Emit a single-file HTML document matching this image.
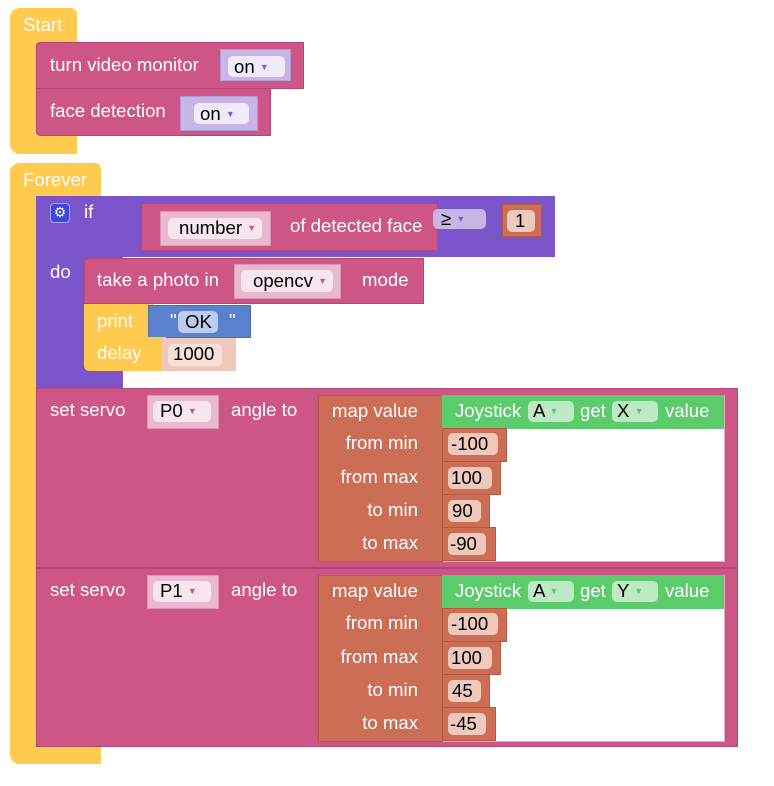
<!DOCTYPE html><html><head><meta charset="utf-8"><style>
body{margin:0;width:774px;height:786px;background:#fff;position:relative;overflow:hidden;font-family:"Liberation Sans",Arial,sans-serif;font-size:18.6px}
div{position:absolute;box-sizing:border-box}
.t{color:#fff;white-space:nowrap;line-height:20px}
.k{color:#000;white-space:nowrap;line-height:20px}
.y{background:#ffca4d}.p{background:#ce5686;border:1px solid #b54572}.u{background:#7d55cb}
.o{background:#cc6d55;border:1px solid #b35a43}.g{background:#5ccb6c}
.f{border-radius:5px}
.ar{font-size:9px;color:#8a5ad0;vertical-align:3px}
</style></head><body>
<!-- Start -->
<div class="y" style="left:10px;top:8px;width:67px;height:35px;border-radius:10px 6px 0 0"></div>
<div class="y" style="left:10px;top:8px;width:27px;height:146px;border-radius:10px 0 0 10px"></div>
<div class="y" style="left:10px;top:136px;width:67px;height:18px;border-radius:0 0 0 10px"></div>
<div class="t" style="left:23px;top:15px">Start</div>
<div class="p" style="left:36px;top:42px;width:268px;height:47px;border-radius:4px 0 0 0"></div>
<div class="t" style="left:50px;top:55px">turn video monitor</div>
<div style="left:220px;top:49px;width:71px;height:32px;background:#c8b5e5;border:1px solid #b09ad6"></div>
<div class="f" style="left:228px;top:56px;width:57px;height:21px;background:#f0ebfa"></div>
<div class="k" style="left:234px;top:57px">on <span class="ar">▼</span></div>
<div class="p" style="left:36px;top:88px;width:235px;height:48px;border-radius:0 0 0 4px"></div>
<div class="t" style="left:50px;top:101px">face detection</div>
<div style="left:180px;top:96px;width:78px;height:35px;background:#c8b5e5;border:1px solid #b09ad6"></div>
<div class="f" style="left:194px;top:103px;width:55px;height:21px;background:#f0ebfa"></div>
<div class="k" style="left:200px;top:104px">on <span class="ar">▼</span></div>
<!-- Forever -->
<div class="y" style="left:10px;top:163px;width:91px;height:35px;border-radius:10px 6px 0 0"></div>
<div class="y" style="left:10px;top:163px;width:27px;height:601px;border-radius:10px 0 0 10px"></div>
<div class="y" style="left:10px;top:745px;width:91px;height:19px;border-radius:0 0 0 10px"></div>
<div class="t" style="left:23px;top:170px">Forever</div>
<!-- if -->
<div class="u" style="left:36px;top:196px;width:519px;height:61px;border-radius:4px 0 0 0"></div>
<div class="u" style="left:36px;top:196px;width:87px;height:193px"></div>
<div style="left:50px;top:203px;width:20px;height:20px;background:#3c46e0;border:1px solid #a7a7ff;border-radius:4px;color:#fff;font-size:14px;line-height:17px;text-align:center">⚙</div>
<div class="t" style="left:84px;top:202px">if</div>
<div class="t" style="left:50px;top:262px">do</div>
<div class="p" style="left:141px;top:203px;width:297px;height:48px"></div>
<div style="left:160px;top:211px;width:111px;height:35px;background:#eab9cf;border:1px solid #d897b3"></div>
<div class="f" style="left:168px;top:218px;width:94px;height:21px;background:#f8e6ee"></div>
<div class="k" style="left:179px;top:218px">number <span class="ar" style="color:#ce5686">▼</span></div>
<div class="t" style="left:290px;top:216px">of detected face</div>
<div class="f" style="left:433px;top:209px;width:53px;height:20px;background:#c8b5e5"></div>
<div class="k" style="left:441px;top:209px">≥ <span class="ar">▼</span></div>
<div class="o" style="left:502px;top:204px;width:40px;height:33px"></div>
<div class="f" style="left:507px;top:210px;width:28px;height:22px;background:#f0c9bd"></div>
<div class="k" style="left:515px;top:211px">1</div>
<div class="p" style="left:84px;top:258px;width:340px;height:46px;border-radius:4px 0 0 0"></div>
<div class="t" style="left:97px;top:270px">take a photo in</div>
<div style="left:234px;top:264px;width:107px;height:35px;background:#eab9cf;border:1px solid #d897b3"></div>
<div class="f" style="left:241px;top:270px;width:92px;height:22px;background:#f8e6ee"></div>
<div class="k" style="left:253px;top:271px">opencv <span class="ar" style="color:#ce5686">▼</span></div>
<div class="t" style="left:362px;top:270px">mode</div>
<div class="y" style="left:84px;top:304px;width:70px;height:34px"></div>
<div class="t" style="left:97px;top:311px">print</div>
<div style="left:148px;top:305px;width:103px;height:33px;background:#5b80cc;border:1px solid #4a6db5"></div>
<div class="t" style="left:170px;top:311px">"</div>
<div class="f" style="left:178px;top:311px;width:40px;height:22px;background:#bcccee"></div>
<div class="k" style="left:185px;top:312px">OK</div>
<div class="t" style="left:229px;top:311px">"</div>
<div class="y" style="left:84px;top:337px;width:82px;height:34px;border-radius:0 0 0 5px"></div>
<div class="t" style="left:97px;top:343px">delay</div>
<div style="left:162px;top:338px;width:74px;height:33px;background:#f0c9bd"></div>
<div class="f" style="left:168px;top:344px;width:54px;height:22px;background:#f7e0d8"></div>
<div class="k" style="left:173px;top:344px">1000</div>
<!-- servo blocks -->
<div class="p" style="left:36px;top:388px;width:702px;height:180px"></div>
<div class="p" style="left:36px;top:568px;width:702px;height:179px"></div>
<div class="t" style="left:50px;top:400px">set servo</div>
<div class="t" style="left:50px;top:580px">set servo</div>
<div style="left:147px;top:395px;width:72px;height:34px;background:#eab9cf;border:1px solid #d897b3"></div>
<div class="f" style="left:153px;top:401px;width:58px;height:21px;background:#f8e6ee"></div>
<div class="k" style="left:160px;top:401px">P0 <span class="ar" style="color:#ce5686">▼</span></div>
<div style="left:147px;top:575px;width:72px;height:34px;background:#eab9cf;border:1px solid #d897b3"></div>
<div class="f" style="left:153px;top:581px;width:58px;height:21px;background:#f8e6ee"></div>
<div class="k" style="left:160px;top:581px">P1 <span class="ar" style="color:#ce5686">▼</span></div>
<div class="t" style="left:231px;top:400px">angle to</div>
<div class="t" style="left:231px;top:580px">angle to</div>

<div style="left:318px;top:395px;width:407px;height:167px;background:#fff;border:1px solid #e0a9bf"></div>
<div class="o" style="left:318px;top:395px;width:125px;height:167px"></div>
<div class="g" style="left:442px;top:395px;width:282px;height:34px"></div>
<div class="t" style="left:332px;top:401px">map value</div>
<div class="t" style="left:455px;top:401px">Joystick</div>
<div class="f" style="left:528px;top:401px;width:46px;height:21px;background:#bde9c4"></div>
<div class="k" style="left:533px;top:401px">A <span class="ar" style="color:#5ccb6c">▼</span></div>
<div class="t" style="left:580px;top:401px">get</div>
<div class="f" style="left:612px;top:401px;width:46px;height:21px;background:#bde9c4"></div>
<div class="k" style="left:617px;top:401px">X <span class="ar" style="color:#5ccb6c">▼</span></div>
<div class="t" style="left:665px;top:401px">value</div>
<div class="t" style="left:290px;top:433px;width:128px;text-align:right">from min</div>
<div class="t" style="left:290px;top:467px;width:128px;text-align:right">from max</div>
<div class="t" style="left:290px;top:500px;width:128px;text-align:right">to min</div>
<div class="t" style="left:290px;top:533px;width:128px;text-align:right">to max</div>
<div class="o" style="left:442px;top:428px;width:65px;height:34px"></div><div class="f" style="left:448px;top:433px;width:50px;height:22px;background:#f0c9bd"></div><div class="k" style="left:451px;top:434px">-100</div>
<div class="o" style="left:442px;top:461px;width:59px;height:34px"></div><div class="f" style="left:448px;top:467px;width:44px;height:22px;background:#f0c9bd"></div><div class="k" style="left:451px;top:468px">100</div>
<div class="o" style="left:442px;top:494px;width:48px;height:34px"></div><div class="f" style="left:448px;top:500px;width:33px;height:22px;background:#f0c9bd"></div><div class="k" style="left:452px;top:501px">90</div>
<div class="o" style="left:442px;top:527px;width:54px;height:34px"></div><div class="f" style="left:448px;top:533px;width:38px;height:22px;background:#f0c9bd"></div><div class="k" style="left:450px;top:534px">-90</div>

<div style="left:318px;top:575px;width:407px;height:167px;background:#fff;border:1px solid #e0a9bf"></div>
<div class="o" style="left:318px;top:575px;width:125px;height:167px"></div>
<div class="g" style="left:442px;top:575px;width:282px;height:34px"></div>
<div class="t" style="left:332px;top:581px">map value</div>
<div class="t" style="left:455px;top:581px">Joystick</div>
<div class="f" style="left:528px;top:581px;width:46px;height:21px;background:#bde9c4"></div>
<div class="k" style="left:533px;top:581px">A <span class="ar" style="color:#5ccb6c">▼</span></div>
<div class="t" style="left:580px;top:581px">get</div>
<div class="f" style="left:612px;top:581px;width:46px;height:21px;background:#bde9c4"></div>
<div class="k" style="left:617px;top:581px">Y <span class="ar" style="color:#5ccb6c">▼</span></div>
<div class="t" style="left:665px;top:581px">value</div>
<div class="t" style="left:290px;top:613px;width:128px;text-align:right">from min</div>
<div class="t" style="left:290px;top:647px;width:128px;text-align:right">from max</div>
<div class="t" style="left:290px;top:680px;width:128px;text-align:right">to min</div>
<div class="t" style="left:290px;top:713px;width:128px;text-align:right">to max</div>
<div class="o" style="left:442px;top:608px;width:65px;height:34px"></div><div class="f" style="left:448px;top:613px;width:50px;height:22px;background:#f0c9bd"></div><div class="k" style="left:451px;top:614px">-100</div>
<div class="o" style="left:442px;top:641px;width:59px;height:34px"></div><div class="f" style="left:448px;top:647px;width:44px;height:22px;background:#f0c9bd"></div><div class="k" style="left:451px;top:648px">100</div>
<div class="o" style="left:442px;top:674px;width:48px;height:34px"></div><div class="f" style="left:448px;top:680px;width:33px;height:22px;background:#f0c9bd"></div><div class="k" style="left:452px;top:681px">45</div>
<div class="o" style="left:442px;top:707px;width:54px;height:34px"></div><div class="f" style="left:448px;top:713px;width:38px;height:22px;background:#f0c9bd"></div><div class="k" style="left:450px;top:714px">-45</div>
</body></html>
